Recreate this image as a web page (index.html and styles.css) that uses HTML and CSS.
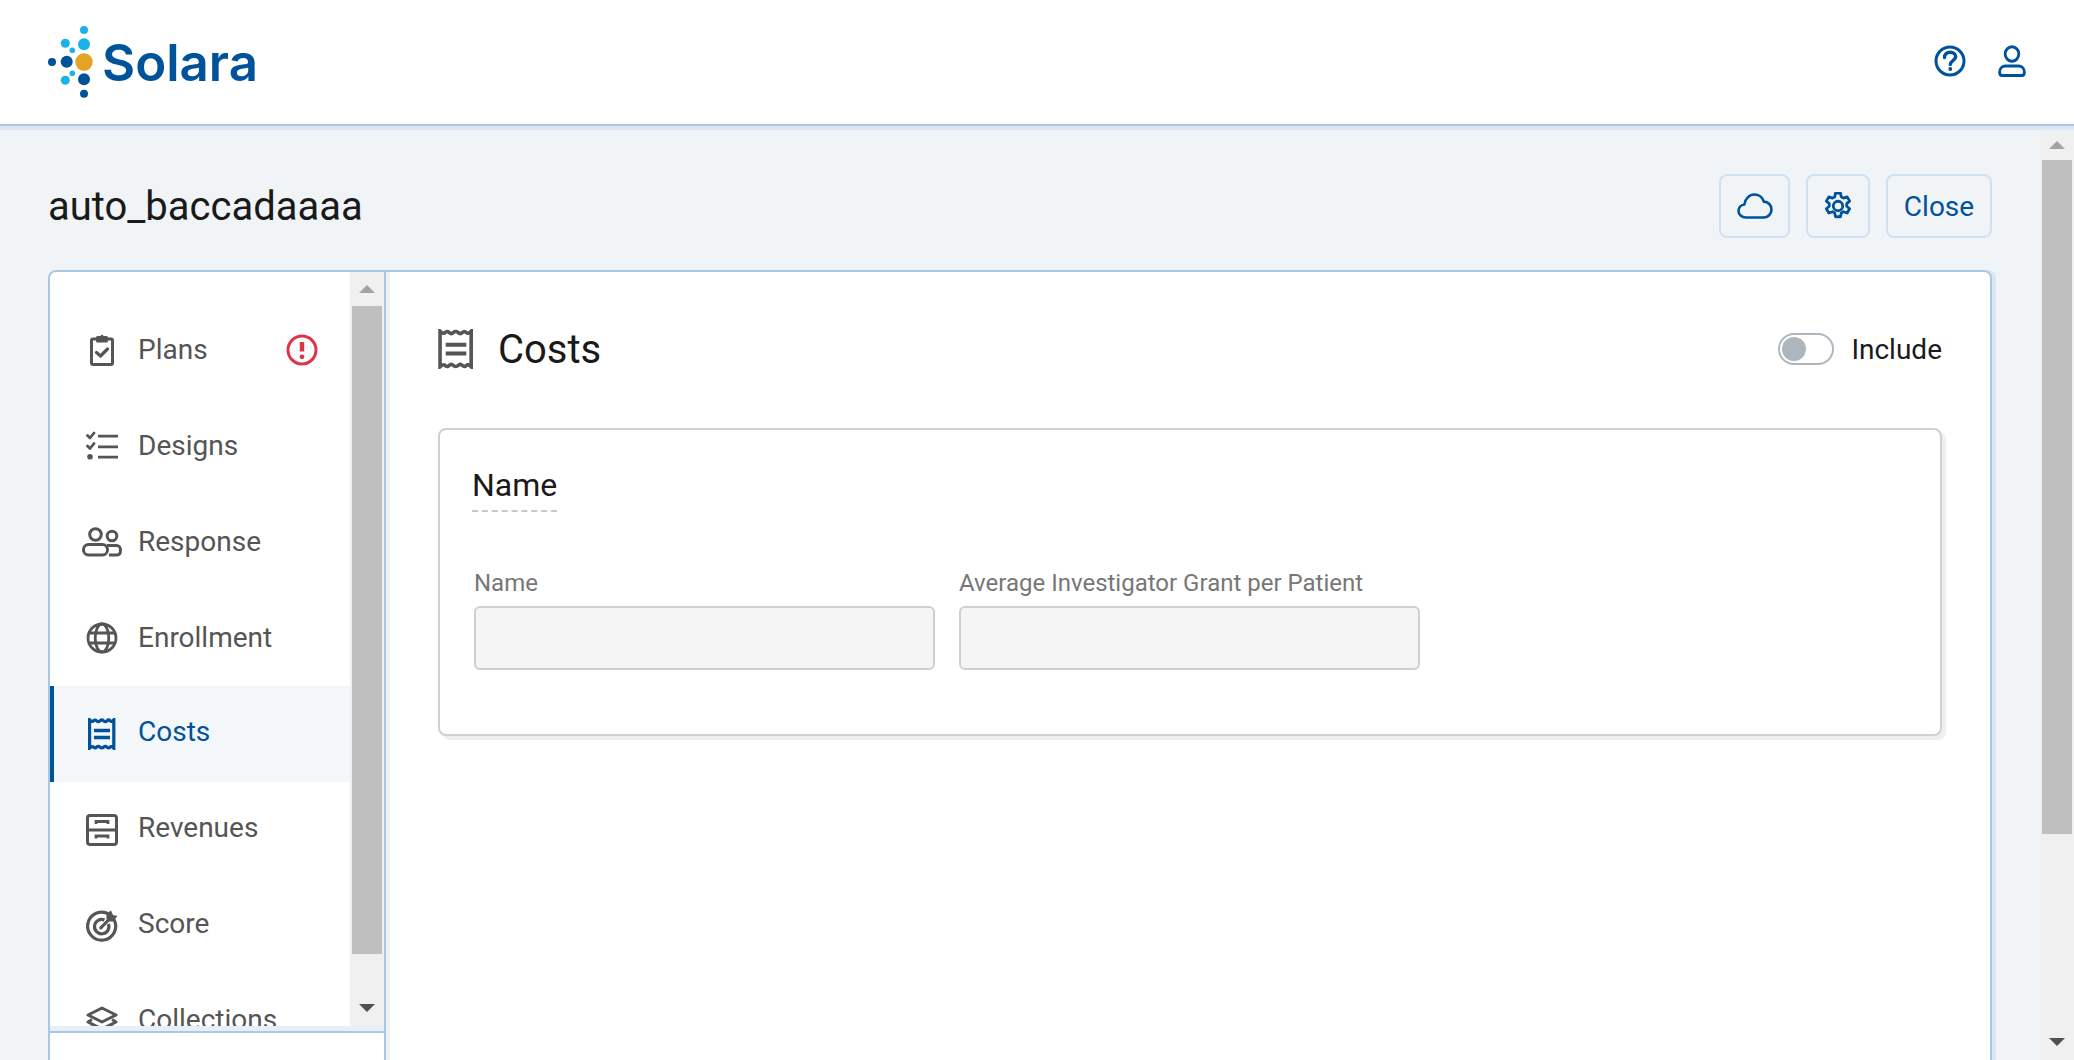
FILE: index.html
```html
<!DOCTYPE html>
<html lang="en">
<head>
    <meta charset="UTF-8">
    <meta name="viewport" content="width=device-width, initial-scale=1.0">
    <title>Solara</title>
    <link rel="stylesheet" href="styles.css">
</head>
<body>

<header class="topbar">
    <div class="logo">
        <svg class="logo-mark" width="72" height="76" viewBox="48 24 72 76">
            <circle cx="84" cy="30" r="4" fill="#1ab2ea"/>
            <circle cx="84" cy="44.3" r="6" fill="#1ab2ea"/>
            <circle cx="65.3" cy="43.3" r="4.5" fill="#1ab2ea"/>
            <circle cx="72.3" cy="50.3" r="2.8" fill="#1ab2ea"/>
            <circle cx="72.3" cy="73.3" r="2.8" fill="#1ab2ea"/>
            <circle cx="65.3" cy="80.3" r="4.5" fill="#1ab2ea"/>
            <circle cx="52" cy="62" r="4" fill="#00529b"/>
            <circle cx="66.7" cy="61.7" r="6" fill="#00529b"/>
            <circle cx="84" cy="79.3" r="6" fill="#00529b"/>
            <circle cx="84" cy="93.7" r="4" fill="#00529b"/>
            <circle cx="84" cy="62" r="8.7" fill="#e6a225"/>
        </svg>
        <span class="logo-text">Solara</span>
    </div>
    <div class="topbar-icons">
        <svg width="32" height="32" viewBox="0 0 32 32" fill="none" stroke="#00529b" stroke-width="3" stroke-linecap="round">
            <circle cx="16" cy="16" r="14"/>
            <path d="M10.500 12.500c0-3.300 2.500-5.300 5.700-5.300 3.200 0 5.500 1.900 5.500 4.600 0 3.700-5.400 4-5.400 7.700" stroke-width="3.400"/>
            <circle cx="16.300" cy="24" r="1.900" fill="#00529b" stroke="none"/>
        </svg>
        <svg width="28" height="32" viewBox="0 0 30 32" preserveAspectRatio="none" fill="none" stroke="#00529b" stroke-width="3">
            <circle cx="15" cy="9" r="7.300"/>
            <path d="M8 21h14c3.600 0 6.300 2.700 6.300 6.300 0 1.900-1 3.300-2.800 3.300H4.500c-1.800 0-2.800-1.400-2.800-3.300C1.700 23.700 4.400 21 8 21z"/>
        </svg>
    </div>
</header>

<div class="page">
    <main class="content">
        <div class="title-row">
            <h1 class="page-title">auto_baccadaaaa</h1>
            <div class="actions">
                <button class="btn btn-cloud">
                    <svg width="36" height="26" viewBox="0 0 36 26" fill="none" stroke="#00529b" stroke-width="2.600" stroke-linejoin="round">
                        <path d="M9 24.500C4.700 24.500 1.500 21.600 1.500 18c0-3.300 2.500-6 5.800-6.500C8.100 5.700 12.400 1.500 17.500 1.500c4.500 0 8.100 3 9.300 7.100 4.400.2 7.700 3.500 7.700 7.900 0 4.600-3.500 8-8 8z"/>
                    </svg>
                </button>
                <button class="btn btn-gear">
                    <svg width="28" height="28" viewBox="1 1 26 26" fill="none" stroke="#00529b" stroke-width="2.600" stroke-linejoin="round">
                        <circle cx="14" cy="14" r="4.400"/>
                        <path d="M11.700 2h4.600l.7 3.500 2.100 1.200 3.400-1.200 2.300 4-2.700 2.300v2.400l2.700 2.300-2.300 4-3.400-1.200-2.100 1.200-.7 3.500h-4.600l-.7-3.500-2.100-1.200-3.400 1.200-2.300-4 2.700-2.300v-2.400L3.200 9.500l2.300-4 3.400 1.200L11 5.500z"/>
                    </svg>
                </button>
                <button class="btn btn-close">Close</button>
            </div>
        </div>

        <div class="panel">
            <aside class="sidebar">
                <div class="nav-view">
                    <ul class="nav">
                        <li class="nav-item">
                            <span class="nav-icon">
                                <svg width="32" height="32" viewBox="0 0 32 32" fill="none" stroke="currentColor" stroke-width="3" stroke-linejoin="round" stroke-linecap="round">
                                    <rect x="5.500" y="5" width="21" height="25.500" rx="1.500"/>
                                    <path d="M11.500 3.500h9v3.500h-9z" fill="currentColor"/>
                                    <circle cx="16" cy="2.300" r="1.500" fill="currentColor" stroke="none"/>
                                    <path d="M10.500 18.500l4 3.500 7-7" stroke-width="3.200"/>
                                </svg>
                            </span>
                            <span class="nav-label">Plans</span>
                            <svg class="nav-alert" width="32" height="32" viewBox="0 0 32 32" fill="none" stroke="#dc3545" stroke-width="3">
                                <circle cx="16" cy="16" r="14"/>
                                <path d="M16 8v9.500" stroke-width="4.400"/>
                                <circle cx="16" cy="22.800" r="2.400" fill="#dc3545" stroke="none"/>
                            </svg>
                        </li>
                        <li class="nav-item">
                            <span class="nav-icon">
                                <svg width="32" height="32" viewBox="0 0 32 32" fill="none" stroke="currentColor" stroke-width="2.800" stroke-linecap="round" stroke-linejoin="round">
                                    <path d="M1.500 5.500l2.500 2.500 4-5M1.500 16l2.500 2.500 4-5"/>
                                    <circle cx="4" cy="26.800" r="2.800" fill="currentColor" stroke="none"/>
                                    <path d="M12 6.200h20M12 16.800h20M12 27.200h20" stroke-linecap="butt"/>
                                </svg>
                            </span>
                            <span class="nav-label">Designs</span>
                        </li>
                        <li class="nav-item">
                            <span class="nav-icon">
                                <svg width="40" height="30" viewBox="0 0 40 30" fill="none" stroke="currentColor" stroke-width="3">
                                    <circle cx="13.500" cy="7.500" r="5.800"/>
                                    <circle cx="30" cy="9" r="4.800"/>
                                    <rect x="1.500" y="17.500" width="24" height="10.500" rx="5"/>
                                    <path d="M25 18.500h9.500c2.300 0 4 1.800 4 4.500s-1 5-3.500 5H27"/>
                                </svg>
                            </span>
                            <span class="nav-label">Response</span>
                        </li>
                        <li class="nav-item">
                            <span class="nav-icon">
                                <svg width="32" height="32" viewBox="0 0 32 32" fill="none" stroke="currentColor" stroke-width="2.800">
                                    <circle cx="16" cy="16" r="14"/>
                                    <ellipse cx="16" cy="16" rx="6.800" ry="14"/>
                                    <path d="M3.500 11h25M3.500 21h25"/>
                                </svg>
                            </span>
                            <span class="nav-label">Enrollment</span>
                        </li>
                        <li class="nav-item nav-item-active">
                            <span class="nav-icon">
                                <svg width="28" height="32" viewBox="0 0 28 32" fill="none" stroke="currentColor" stroke-width="3.200">
                                    <path d="M1.600 1.800c2 2 3.100 2 4 1s2-1 3 0 2.400 1 3.400 0 2.600-1 3.600 0 2.400 1 3.400 0 2-1 3 0 2 1 3.800-1v28.400c-1.800-2-2.900-2-3.800-1s-2 1-3 0-2.400-1-3.400 0-2.600 1-3.600 0-2.400-1-3.400 0-2 1-3 0-2-1-4 1z"/>
                                    <path d="M6 12.500h16M6 19.500h16" stroke-width="3.400"/>
                                </svg>
                            </span>
                            <span class="nav-label">Costs</span>
                        </li>
                        <li class="nav-item">
                            <span class="nav-icon">
                                <svg width="32" height="32" viewBox="0 0 32 32" fill="none" stroke="currentColor" stroke-width="3">
                                    <rect x="1.500" y="1.500" width="29" height="29" rx="2.500"/>
                                    <path d="M1.500 16h29"/>
                                    <path d="M10 10V7.500h12V10M10 24.500V22h12v2.500" stroke-width="2.800"/>
                                </svg>
                            </span>
                            <span class="nav-label">Revenues</span>
                        </li>
                        <li class="nav-item">
                            <span class="nav-icon">
                                <svg width="32" height="32" viewBox="0 0 32 32" fill="none" stroke="currentColor" stroke-width="3.200">
                                    <path d="M23 4.200A14 14 0 1 0 28 9.500"/>
                                    <path d="M18.500 10A7.200 7.200 0 1 0 22.400 14"/>
                                    <path d="M14.800 17.800L23 9.500" stroke-linecap="round"/>
                                    <path d="M20.500 3.500L25 .5l2 4.500 4.500 1-4.500 5.500h-5l-1.500-2z" fill="currentColor" stroke="none"/>
                                </svg>
                            </span>
                            <span class="nav-label">Score</span>
                        </li>
                        <li class="nav-item">
                            <span class="nav-icon">
                                <svg width="32" height="32" viewBox="0 0 32 32" fill="none" stroke="currentColor" stroke-width="3" stroke-linejoin="round">
                                    <path d="M16 2l14 7-14 7-14-7z"/>
                                    <path d="M6 13.500L2 16l14 7 14-7-4-2.500"/>
                                    <path d="M6 20.500L2 23l14 7 14-7-4-2.500"/>
                                </svg>
                            </span>
                            <span class="nav-label">Collections</span>
                        </li>
                    </ul>
                    <div class="scrollbar scrollbar-nav">
                        <span class="arrow-up"></span>
                        <div class="thumb"></div>
                        <span class="arrow-down"></span>
                    </div>
                </div>
                <div class="sidebar-foot"></div>
            </aside>

            <section class="main-pane">
                <div class="pane-head">
                    <div class="pane-title">
                        <svg width="36" height="40" viewBox="0 0 28 32" preserveAspectRatio="none" fill="none" stroke="#555" stroke-width="2.800">
                            <path d="M1.600 1.800c2 2 3.100 2 4 1s2-1 3 0 2.400 1 3.400 0 2.600-1 3.600 0 2.400 1 3.400 0 2-1 3 0 2 1 3.800-1v28.400c-1.800-2-2.900-2-3.800-1s-2 1-3 0-2.400-1-3.400 0-2.600 1-3.600 0-2.400-1-3.400 0-2 1-3 0-2-1-4 1z"/>
                            <path d="M6 12.500h16M6 19.500h16" stroke-width="3.200"/>
                        </svg>
                        <h2>Costs</h2>
                    </div>
                    <div class="include">
                        <span class="toggle"><span class="toggle-knob"></span></span>
                        <span>Include</span>
                    </div>
                </div>

                <div class="card">
                    <h3 class="card-title">Name</h3>
                    <div class="fields">
                        <div class="field">
                            <label for="name">Name</label>
                            <input type="text" id="name" disabled>
                        </div>
                        <div class="field">
                            <label for="grant">Average Investigator Grant per Patient</label>
                            <input type="text" id="grant" disabled>
                        </div>
                    </div>
                </div>
            </section>
        </div>
    </main>

    <div class="scrollbar scrollbar-page">
        <span class="arrow-up"></span>
        <div class="thumb"></div>
        <span class="arrow-down"></span>
    </div>
</div>

</body>
</html>
```

FILE: styles.css
```css
* {
    box-sizing: border-box;
}

html {
    height: 1060px;
    overflow: hidden;
}

body {
    margin: 0;
    height: 1060px;
    overflow: hidden;
    display: flex;
    flex-direction: column;
    font-family: 'Roboto', 'Liberation Sans', sans-serif;
    background-color: #f1f4f7;
    color: #1a1a1a;
}

/* top bar */
.topbar {
    flex: none;
    height: 126px;
    padding: 0 48px;
    display: flex;
    justify-content: space-between;
    align-items: center;
    background-color: #fff;
    border-bottom: 2px solid #a8c8e8;
    box-shadow: 0 4px 0 #dce6f0;
    position: relative;
    z-index: 1;
}

.logo {
    display: flex;
    align-items: center;
    height: 124px;
}

.logo-mark {
    display: block;
}

.logo-text {
    margin-left: -18px;
    font-family: 'Inter', 'Liberation Sans', sans-serif;
    font-size: 51px;
    font-weight: 600;
    color: #00529b;
}

.topbar-icons {
    display: flex;
    align-items: center;
    gap: 32px;
    margin-top: -2px;
}

.topbar-icons svg {
    display: block;
}

/* page below the top bar */
.page {
    flex: 1;
    min-height: 0;
    display: flex;
    padding-top: 4px;
    overflow: hidden;
}

.content {
    flex: 1;
    min-width: 0;
    padding: 44px 48px 0;
}

.title-row {
    display: flex;
    justify-content: space-between;
    align-items: center;
    height: 64px;
    margin-bottom: 32px;
}

.page-title {
    margin: 0;
    font-size: 40px;
    font-weight: 400;
}

.actions {
    display: flex;
    gap: 16px;
}

.btn {
    height: 64px;
    padding: 0;
    display: flex;
    align-items: center;
    justify-content: center;
    background-color: transparent;
    border: 2px solid #d0e1f5;
    border-radius: 8px;
    color: #00529b;
    font-family: inherit;
    font-size: 28px;
}

.btn-cloud {
    width: 71px;
}

.btn-gear {
    width: 64px;
}

.btn-close {
    width: 106px;
}

/* main panel */
.panel {
    height: 900px;
    display: flex;
    background-color: #fff;
    border: 2px solid #a8c8e8;
    border-radius: 8px;
    box-shadow: 4px 0 0 #dce6f0;
}

.sidebar {
    flex: none;
    width: 336px;
    display: flex;
    flex-direction: column;
    border-right: 2px solid #a8c8e8;
    box-shadow: 4px 0 0 #eef2f7;
}

.nav-view {
    flex: none;
    height: 754px;
    display: flex;
    box-shadow: 0 5px 0 #e9eff6;
}

.nav {
    flex: 1;
    min-width: 0;
    margin: 0;
    padding: 30px 0 0;
    list-style: none;
    overflow: hidden;
}

.nav-item {
    height: 96px;
    padding: 0 32px 0 32px;
    display: flex;
    align-items: center;
    color: #555;
    font-size: 28px;
}

.nav-item-active {
    padding-left: 28px;
    border-left: 4px solid #00529b;
    background-color: #f4f7fa;
    color: #00529b;
}

.nav-icon {
    flex: none;
    width: 40px;
    height: 32px;
    margin-right: 16px;
    display: flex;
    align-items: center;
    justify-content: center;
}

.nav-label {
    flex: 1;
    position: relative;
    top: -3px;
}

.nav-item:nth-child(-n+4) .nav-label {
    top: -1px;
}

.nav-alert {
    flex: none;
}

.sidebar-foot {
    flex: 1;
    margin-top: 5px;
    border-top: 2px solid #a8c8e8;
}

/* hand drawn scrollbars */
.scrollbar {
    flex: none;
    width: 34px;
    display: flex;
    flex-direction: column;
    align-items: center;
    background-color: #f0f0f0;
}

.scrollbar .thumb {
    flex: none;
    width: 30px;
    background-color: #bfbfbf;
}

.arrow-up, .arrow-down {
    display: block;
    flex: none;
    width: 0;
    height: 0;
    border-left: 8px solid transparent;
    border-right: 8px solid transparent;
}

.arrow-up {
    border-bottom: 8px solid #a3a3a3;
}

.arrow-down {
    border-top: 8px solid #505050;
}

.scrollbar-nav .arrow-up {
    margin: 13px 0;
}

.scrollbar-nav .thumb {
    height: 648px;
}

.scrollbar-nav .arrow-down {
    margin-top: 50px;
}

.scrollbar-page .arrow-up {
    margin: 11px 0;
}

.scrollbar-page .thumb {
    height: 674px;
}

.scrollbar-page .arrow-down {
    margin-top: 204px;
}

/* costs pane */
.main-pane {
    flex: 1;
    min-width: 0;
    padding: 57px 48px 0 52px;
}

.pane-head {
    display: flex;
    justify-content: space-between;
    align-items: center;
    height: 40px;
    margin-bottom: 59px;
}

.pane-title {
    display: flex;
    align-items: center;
    gap: 24px;
}

.pane-title h2 {
    margin: 0;
    font-size: 40px;
    font-weight: 400;
}

.include {
    display: flex;
    align-items: center;
    gap: 17px;
    font-size: 28px;
}

.toggle {
    display: block;
    width: 56px;
    height: 32px;
    padding: 2px;
    border: 2px solid #adb5bd;
    border-radius: 16px;
}

.toggle-knob {
    display: block;
    width: 24px;
    height: 24px;
    border-radius: 50%;
    background-color: #adb5bd;
}

.card {
    height: 308px;
    padding: 36px 34px 0;
    background-color: #fff;
    border: 2px solid #d0d0d0;
    border-radius: 8px;
    box-shadow: 4px 4px 0 #efefef;
}

.card-title {
    display: inline-block;
    margin: 0 0 57px -2px;
    padding-bottom: 6px;
    border-bottom: 2px dashed #c8c8c8;
    font-size: 32px;
    font-weight: 400;
}

.fields {
    display: flex;
    gap: 24px;
}

.field {
    width: 461px;
}

.field label {
    display: block;
    margin-bottom: 9px;
    color: #777;
    font-size: 24px;
}

.field input {
    display: block;
    width: 100%;
    height: 64px;
    background-color: #f5f5f5;
    border: 2px solid #cfcfcf;
    border-radius: 6px;
}
```
